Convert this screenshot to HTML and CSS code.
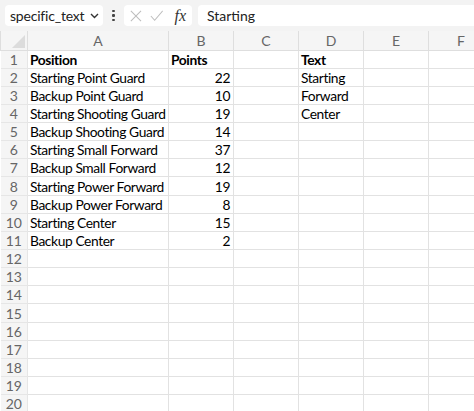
FILE: index.html
```html
<!DOCTYPE html>
<html lang="en">
<head>
  <meta charset="UTF-8">
  <title>Sheet</title>
  <link rel="stylesheet" href="styles.css">
</head>
<body>
  <div class="formula-bar">
    <div class="name-box">
      <span>specific_text</span>
      <svg class="chevron" width="9" height="6" viewBox="0 0 9 6"><path d="M1 1l3.5 3.5L8 1" fill="none" stroke="#333" stroke-width="1.4"/></svg>
    </div>
    <div class="dots"><i></i><i></i><i></i></div>
    <div class="fx-box">
      <svg width="14" height="14" viewBox="0 0 14 14"><path d="M1 1l12 12M13 1L1 13" stroke="#bdbdbd" stroke-width="1.2"/></svg>
      <svg width="16" height="14" viewBox="0 0 16 14"><path d="M1 7l4.5 5L15 1" fill="none" stroke="#bdbdbd" stroke-width="1.2"/></svg>
      <span class="fx">fx</span>
    </div>
    <div class="formula-input">Starting</div>
  </div>

  <table class="sheet">
    <colgroup>
      <col class="c-row"><col class="c-a"><col class="c-std"><col class="c-std"><col class="c-std"><col class="c-std"><col class="c-std">
    </colgroup>
    <thead>
      <tr>
        <th class="corner"><div class="tri"></div></th>
        <th>A</th><th>B</th><th>C</th><th>D</th><th>E</th><th>F</th>
      </tr>
    </thead>
    <tbody>
      <tr><th>1</th><td class="b">Position</td><td class="b">Points</td><td></td><td class="b">Text</td><td></td><td></td></tr>
      <tr><th>2</th><td>Starting Point Guard</td><td class="n">22</td><td></td><td>Starting</td><td></td><td></td></tr>
      <tr><th>3</th><td>Backup Point Guard</td><td class="n">10</td><td></td><td>Forward</td><td></td><td></td></tr>
      <tr><th>4</th><td>Starting Shooting Guard</td><td class="n">19</td><td></td><td>Center</td><td></td><td></td></tr>
      <tr><th>5</th><td>Backup Shooting Guard</td><td class="n">14</td><td></td><td></td><td></td><td></td></tr>
      <tr><th>6</th><td>Starting Small Forward</td><td class="n">37</td><td></td><td></td><td></td><td></td></tr>
      <tr><th>7</th><td>Backup Small Forward</td><td class="n">12</td><td></td><td></td><td></td><td></td></tr>
      <tr><th>8</th><td>Starting Power Forward</td><td class="n">19</td><td></td><td></td><td></td><td></td></tr>
      <tr><th>9</th><td>Backup Power Forward</td><td class="n">8</td><td></td><td></td><td></td><td></td></tr>
      <tr><th>10</th><td>Starting Center</td><td class="n">15</td><td></td><td></td><td></td><td></td></tr>
      <tr><th>11</th><td>Backup Center</td><td class="n">2</td><td></td><td></td><td></td><td></td></tr>
      <tr><th>12</th><td></td><td></td><td></td><td></td><td></td><td></td></tr>
      <tr><th>13</th><td></td><td></td><td></td><td></td><td></td><td></td></tr>
      <tr><th>14</th><td></td><td></td><td></td><td></td><td></td><td></td></tr>
      <tr><th>15</th><td></td><td></td><td></td><td></td><td></td><td></td></tr>
      <tr><th>16</th><td></td><td></td><td></td><td></td><td></td><td></td></tr>
      <tr><th>17</th><td></td><td></td><td></td><td></td><td></td><td></td></tr>
      <tr><th>18</th><td></td><td></td><td></td><td></td><td></td><td></td></tr>
      <tr><th>19</th><td></td><td></td><td></td><td></td><td></td><td></td></tr>
      <tr><th>20</th><td></td><td></td><td></td><td></td><td></td><td></td></tr>
    </tbody>
  </table>
</body>
</html>
```

FILE: styles.css
```css
* {
  box-sizing: border-box;
  margin: 0;
  padding: 0;
}

body {
  width: 474px;
  height: 411px;
  overflow: hidden;
  background: #fff;
  font-family: 'Lato', 'Noto Sans', sans-serif;
  color: #000;
}

.formula-bar {
  display: flex;
  align-items: center;
  height: 31px;
  padding: 5px 0 5px 5px;
  background-color: #f3f3f3;
}

.name-box {
  display: flex;
  align-items: center;
  justify-content: space-between;
  width: 98px;
  height: 21px;
  padding: 0 4px 0 5px;
  background: #fff;
  border-radius: 4px;
  font-size: 14px;
  letter-spacing: -0.2px;
  color: #222;
}

.dots {
  display: flex;
  flex-direction: column;
  gap: 2px;
  width: 21px;
  align-items: center;
}

.dots i {
  width: 2.2px;
  height: 2.2px;
  background: #444;
  border-radius: 50%;
}

.fx-box {
  display: flex;
  align-items: center;
  gap: 8px;
  width: 68px;
  height: 21px;
  padding: 0 6px;
  background: #fff;
  border-radius: 4px;
}

.fx {
  font-family: 'Liberation Serif', serif;
  font-style: italic;
  font-size: 16px;
  color: #333;
  margin-left: 3px;
}

.formula-input {
  flex: 1;
  height: 21px;
  margin-left: 6px;
  padding-left: 9px;
  background: #fff;
  border-radius: 4px 0 0 4px;
  font-size: 14px;
  line-height: 21px;
  color: #222;
}

.sheet {
  table-layout: fixed;
  border-collapse: collapse;
  width: 492px;
  font-size: 13.8px;
  letter-spacing: -0.4px;
}

.c-row { width: 27px; }
.c-a { width: 141px; }
.c-std { width: 65px; }

.sheet th,
.sheet td {
  height: 18.15px;
  border: 1px solid #e2e2e2;
  white-space: nowrap;
  overflow: hidden;
  line-height: 16px;
  padding-top: 1px;
}

.sheet thead th {
  height: 19px;
  background: #f5f5f5;
  font-weight: normal;
  color: #666;
  font-size: 14px;
  letter-spacing: 0;
  border-color: #dedede;
  border-top: none;
}

.sheet tbody th {
  background: #f5f5f5;
  color: #666;
  font-weight: normal;
  font-size: 14px;
  letter-spacing: 0;
  text-align: center;
  border-color: #e6e6e6;
  border-left: none;
}

.sheet td {
  padding: 1px 3px 0 2px;
}

.sheet td.b {
  font-weight: bold;
}

.sheet td.n {
  text-align: right;
}

.corner {
  position: relative;
}

.tri {
  position: absolute;
  right: 2px;
  bottom: 2px;
  width: 0;
  height: 0;
  border-left: 13px solid transparent;
  border-bottom: 13px solid #dcdcdc;
}
```
